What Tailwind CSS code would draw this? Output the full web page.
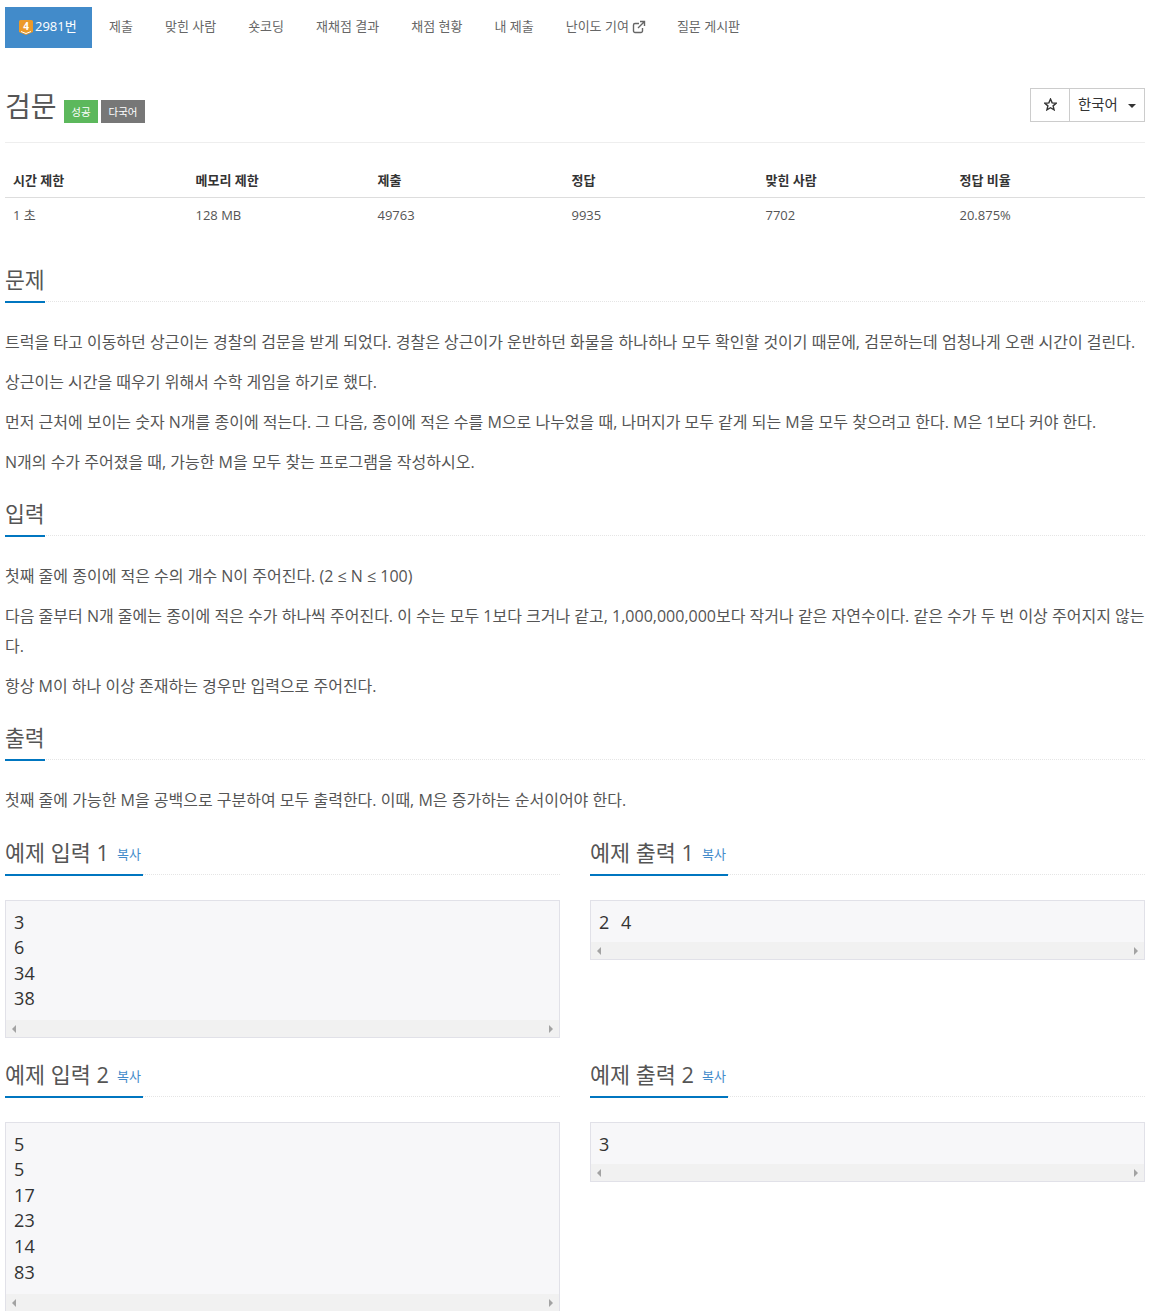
<!doctype html>
<html lang="ko"><head><meta charset="utf-8"><script src="https://cdn.jsdelivr.net/npm/@tailwindcss/browser@4"></script></head>
<body class="bg-white overflow-hidden font-['Open_Sans','Noto_Sans_CJK_KR',sans-serif] text-[#555] text-[13px] h-[1311px]">
<div class="pl-[5px] pr-[10px] pt-[7px]">
<nav class="flex h-[41px] text-[#666] text-[13px]">
<a class="flex items-center gap-[2px] pl-[14px] pb-[1px] bg-[#428bca] text-white w-[87px] whitespace-nowrap"><svg class="w-[14px] h-[15px] shrink-0" viewBox="0 0 14 15"><path d="M0 1.500A1.500 1.500 0 0 1 1.500 0h11A1.500 1.500 0 0 1 14 1.500V12l-7 3-7-3z" fill="#ec9a29"/><path d="M2 11.500 7 13.500l5-2" fill="none" stroke="#fff" stroke-width="1"/><text x="7" y="10" font-size="10" font-weight="700" text-anchor="middle" fill="#fff">4</text></svg>2981번</a>
<a class="flex items-center pl-[17px] pr-[16px] pb-[1px]">제출</a><a class="flex items-center px-[16px] pb-[1px]">맞힌 사람</a><a class="flex items-center px-[16px] pb-[1px]">숏코딩</a><a class="flex items-center px-[16px] pb-[1px]">재채점 결과</a><a class="flex items-center px-[16px] pb-[1px]">채점 현황</a><a class="flex items-center px-[16px] pb-[1px]">내 제출</a>
<a class="flex items-center pl-[16px] pr-[15px] pb-[1px] gap-[3px]">난이도 기여<svg class="w-[14px] h-[14px]" viewBox="0 0 14 14" fill="none" stroke="currentColor" stroke-width="1.400"><path d="M10.500 8v3a1.500 1.500 0 0 1-1.500 1.500H3A1.500 1.500 0 0 1 1.500 11V5A1.500 1.500 0 0 1 3 3.500h4M8 1.500h4.500V6M12.500 1.500 6 8"/></svg></a>
<a class="flex items-center px-[16px] pb-[1px]">질문 게시판</a>
</nav>
<header class="flex justify-between items-start mt-[40px] border-b border-[#eee] h-[55px]">
<div class="flex items-center"><h1 class="text-[28px] leading-[36px] text-[#555] font-normal">검문</h1><span class="ml-[7.500px] mt-[11px] pt-[2px] bg-[#5cb85c] text-white text-[10.500px] h-[23px] w-[34px] flex items-center justify-center">성공</span><span class="ml-[3px] mt-[11px] pt-[2px] bg-[#777] text-white text-[10.500px] h-[23px] w-[44px] flex items-center justify-center">다국어</span></div>
<div class="flex h-[34px] border border-[#ccc] text-[#333]"><span class="w-[39px] pb-[2px] flex items-center justify-center border-r border-[#ccc]"><svg class="w-[13px] h-[13px]" viewBox="0 0 24 24" fill="none" stroke="currentColor" stroke-width="2.600"><path d="m12 2 3 7 7.500.6-5.700 4.900 1.800 7.300L12 17.900l-6.600 3.900 1.800-7.300L1.500 9.600 9 9z"/></svg></span><span class="w-[74px] flex items-center pl-[8px] text-[14.400px]">한국어<span class="ml-[10px] mt-[1px] w-0 h-0 border-x-[4px] border-x-transparent border-t-[4px] border-t-[#333]"></span></span></div>
</header>
<table class="w-full mt-[18px] table-fixed text-[13px] text-left">
<thead class="text-[#333]"><tr class="h-[36px] border-b border-[#ddd]"><th class="pl-[8px] pt-[3px] w-[182.500px]">시간 제한</th><th class="pl-[8px] pt-[3px] w-[182px]">메모리 제한</th><th class="pl-[8px] pt-[3px] w-[194px]">제출</th><th class="pl-[8px] pt-[3px] w-[194px]">정답</th><th class="pl-[8px] pt-[3px] w-[194px]">맞힌 사람</th><th class="pl-[8px] pt-[3px]">정답 비율</th></tr></thead>
<tbody><tr class="h-[36px]"><td class="pl-[8px]">1 초</td><td class="pl-[8px]">128 MB</td><td class="pl-[8px]">49763</td><td class="pl-[8px]">9935</td><td class="pl-[8px]">7702</td><td class="pl-[8px]">20.875%</td></tr></tbody>
</table>
<section class="mt-[22px]">
<div class="border-b border-dotted border-[#e5e5e5] h-[47px] pt-[10px]"><h2 class="inline-block text-[21.600px] leading-[29px] pb-[7px] border-b-2 border-[#0076c0] font-normal">문제</h2></div>
<div class="text-[16px] leading-[30px] pt-[25px]"><p class="mb-[10px]">트럭을 타고 이동하던 상근이는 경찰의 검문을 받게 되었다. 경찰은 상근이가 운반하던 화물을 하나하나 모두 확인할 것이기 때문에, 검문하는데 엄청나게 오랜 시간이 걸린다.</p><p class="mb-[10px]">상근이는 시간을 때우기 위해서 수학 게임을 하기로 했다.</p><p class="mb-[10px]">먼저 근처에 보이는 숫자 N개를 종이에 적는다. 그 다음, 종이에 적은 수를 M으로 나누었을 때, 나머지가 모두 같게 되는 M을 모두 찾으려고 한다. M은 1보다 커야 한다.</p><p>N개의 수가 주어졌을 때, 가능한 M을 모두 찾는 프로그램을 작성하시오.</p></div>
</section>
<section class="mt-[12px]">
<div class="border-b border-dotted border-[#e5e5e5] h-[47px] pt-[10px]"><h2 class="inline-block text-[21.600px] leading-[29px] pb-[7px] border-b-2 border-[#0076c0] font-normal">입력</h2></div>
<div class="text-[16px] leading-[30px] pt-[25px]"><p class="mb-[10px]">첫째 줄에 종이에 적은 수의 개수 N이 주어진다. (2 ≤ N ≤ 100)</p><p class="mb-[10px]">다음 줄부터 N개 줄에는 종이에 적은 수가 하나씩 주어진다. 이 수는 모두 1보다 크거나 같고, 1,000,000,000보다 작거나 같은 자연수이다. 같은 수가 두 번 이상 주어지지 않는다.</p><p>항상 M이 하나 이상 존재하는 경우만 입력으로 주어진다.</p></div>
</section>
<section class="mt-[12px]">
<div class="border-b border-dotted border-[#e5e5e5] h-[47px] pt-[10px]"><h2 class="inline-block text-[21.600px] leading-[29px] pb-[7px] border-b-2 border-[#0076c0] font-normal">출력</h2></div>
<div class="text-[16px] leading-[30px] pt-[25px]"><p>첫째 줄에 가능한 M을 공백으로 구분하여 모두 출력한다. 이때, M은 증가하는 순서이어야 한다.</p></div>
</section>
<div class="grid grid-cols-2 gap-x-[30px] mt-[12px] items-start">
<section class="h-[222px]"><div class="border-b border-dotted border-[#e5e5e5] h-[48px] pt-[12px]"><h2 class="inline-flex items-baseline gap-[8px] pr-[2px] text-[21.800px] leading-[28px] pb-[7px] border-b-2 border-[#0076c0] font-normal">예제 입력 1<span class="text-[13px] leading-none -translate-y-[2px] text-[#428bca]">복사</span></h2></div><pre class="mt-[25px] bg-[#f7f7f9] border border-[#e1e1e8] font-['Open_Sans',sans-serif] text-[18px] tracking-[0.2px] [word-spacing:6.600px] leading-[25.600px] text-[#333] pt-[8.600px] pl-[8px]">3
6
34
38<span class="block -ml-[8px] mt-[8.400px] h-[17px] bg-[#f1f1f1] relative"><span class="absolute left-[6px] top-[5px] border-y-[4px] border-y-transparent border-r-[4px] border-r-[#a3a3a3]"></span><span class="absolute right-[6px] top-[5px] border-y-[4px] border-y-transparent border-l-[4px] border-l-[#a3a3a3]"></span></span></pre></section>
<section class="h-[222px]"><div class="border-b border-dotted border-[#e5e5e5] h-[48px] pt-[12px]"><h2 class="inline-flex items-baseline gap-[8px] pr-[2px] text-[21.800px] leading-[28px] pb-[7px] border-b-2 border-[#0076c0] font-normal">예제 출력 1<span class="text-[13px] leading-none -translate-y-[2px] text-[#428bca]">복사</span></h2></div><pre class="mt-[25px] bg-[#f7f7f9] border border-[#e1e1e8] font-['Open_Sans',sans-serif] text-[18px] tracking-[0.2px] [word-spacing:6.600px] leading-[25.600px] text-[#333] pt-[8.600px] pl-[8px]">2 4<span class="block -ml-[8px] mt-[6.400px] h-[17px] bg-[#f1f1f1] relative"><span class="absolute left-[6px] top-[5px] border-y-[4px] border-y-transparent border-r-[4px] border-r-[#a3a3a3]"></span><span class="absolute right-[6px] top-[5px] border-y-[4px] border-y-transparent border-l-[4px] border-l-[#a3a3a3]"></span></span></pre></section>
<section><div class="border-b border-dotted border-[#e5e5e5] h-[48px] pt-[12px]"><h2 class="inline-flex items-baseline gap-[8px] pr-[2px] text-[21.800px] leading-[28px] pb-[7px] border-b-2 border-[#0076c0] font-normal">예제 입력 2<span class="text-[13px] leading-none -translate-y-[2px] text-[#428bca]">복사</span></h2></div><pre class="mt-[25px] bg-[#f7f7f9] border border-[#e1e1e8] font-['Open_Sans',sans-serif] text-[18px] tracking-[0.2px] [word-spacing:6.600px] leading-[25.600px] text-[#333] pt-[8.600px] pl-[8px]">5
5
17
23
14
83<span class="block -ml-[8px] mt-[8.400px] h-[17px] bg-[#f1f1f1] relative"><span class="absolute left-[6px] top-[5px] border-y-[4px] border-y-transparent border-r-[4px] border-r-[#a3a3a3]"></span><span class="absolute right-[6px] top-[5px] border-y-[4px] border-y-transparent border-l-[4px] border-l-[#a3a3a3]"></span></span></pre></section>
<section><div class="border-b border-dotted border-[#e5e5e5] h-[48px] pt-[12px]"><h2 class="inline-flex items-baseline gap-[8px] pr-[2px] text-[21.800px] leading-[28px] pb-[7px] border-b-2 border-[#0076c0] font-normal">예제 출력 2<span class="text-[13px] leading-none -translate-y-[2px] text-[#428bca]">복사</span></h2></div><pre class="mt-[25px] bg-[#f7f7f9] border border-[#e1e1e8] font-['Open_Sans',sans-serif] text-[18px] tracking-[0.2px] [word-spacing:6.600px] leading-[25.600px] text-[#333] pt-[8.600px] pl-[8px]">3<span class="block -ml-[8px] mt-[6.400px] h-[17px] bg-[#f1f1f1] relative"><span class="absolute left-[6px] top-[5px] border-y-[4px] border-y-transparent border-r-[4px] border-r-[#a3a3a3]"></span><span class="absolute right-[6px] top-[5px] border-y-[4px] border-y-transparent border-l-[4px] border-l-[#a3a3a3]"></span></span></pre></section>
</div>
</div>
</body></html>
